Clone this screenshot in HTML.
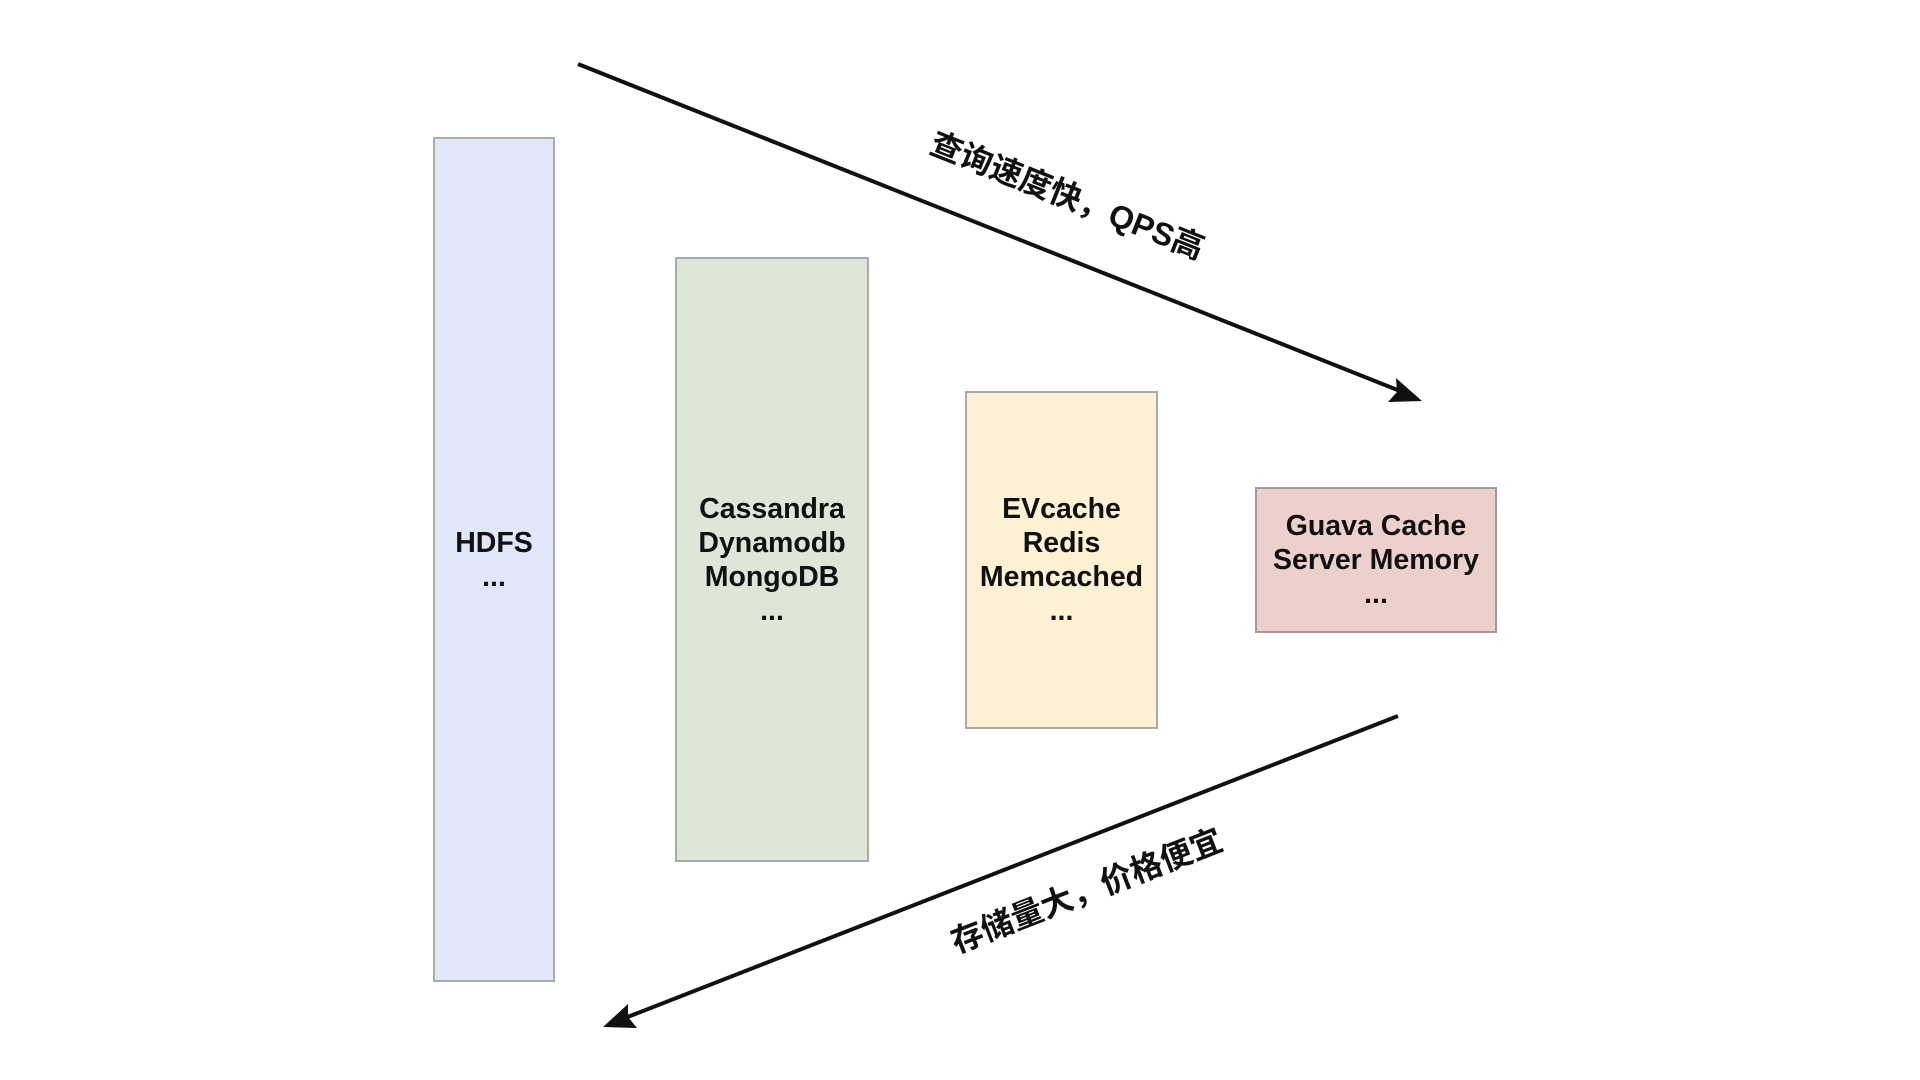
<!DOCTYPE html>
<html><head><meta charset="utf-8"><style>
body{margin:0;width:1920px;height:1080px;background:#fff;position:relative;overflow:hidden;font-family:"Liberation Sans","Noto Sans CJK SC",sans-serif}
.b{position:absolute;box-sizing:border-box;border:2px solid #a9aca8;display:flex;align-items:center;justify-content:center;text-align:center;font-weight:bold;font-size:28.5px;line-height:34px;color:#111}
.l{position:absolute;font-weight:bold;font-size:32px;white-space:nowrap;color:#111}
</style></head><body>
<div class="b" style="left:433px;top:137px;width:122px;height:845px;background:#e0e7f8">HDFS<br>...</div>
<div class="b" style="left:675px;top:257px;width:194px;height:605px;background:#dde6d7">Cassandra<br>Dynamodb<br>MongoDB<br>...</div>
<div class="b" style="left:965px;top:391px;width:193px;height:338px;background:#fcf2d3">EVcache<br>Redis<br>Memcached<br>...</div>
<div class="b" style="left:1255px;top:487px;width:242px;height:146px;background:#ecd0cc;border-color:#a99">Guava Cache<br>Server Memory<br>...</div>
<svg width="1920" height="1080" style="position:absolute;left:0;top:0">
<line x1="578" y1="64" x2="1400" y2="391" stroke="#111" stroke-width="4"/>
<polygon points="1422,401 1388,402 1397,392 1396,378" fill="#111"/>
<line x1="1398" y1="716" x2="625" y2="1018" stroke="#111" stroke-width="4"/>
<polygon points="603,1027 628,1004 628,1017 637,1028" fill="#111"/>
</svg>
<div class="l" style="left:1068px;top:194px;transform:translate(-50%,-50%) rotate(21.7deg)">查询速度快，QPS高</div>
<div class="l" style="left:1086px;top:889px;transform:translate(-50%,-50%) rotate(-21.3deg)">存储量大，价格便宜</div>
</body></html>
